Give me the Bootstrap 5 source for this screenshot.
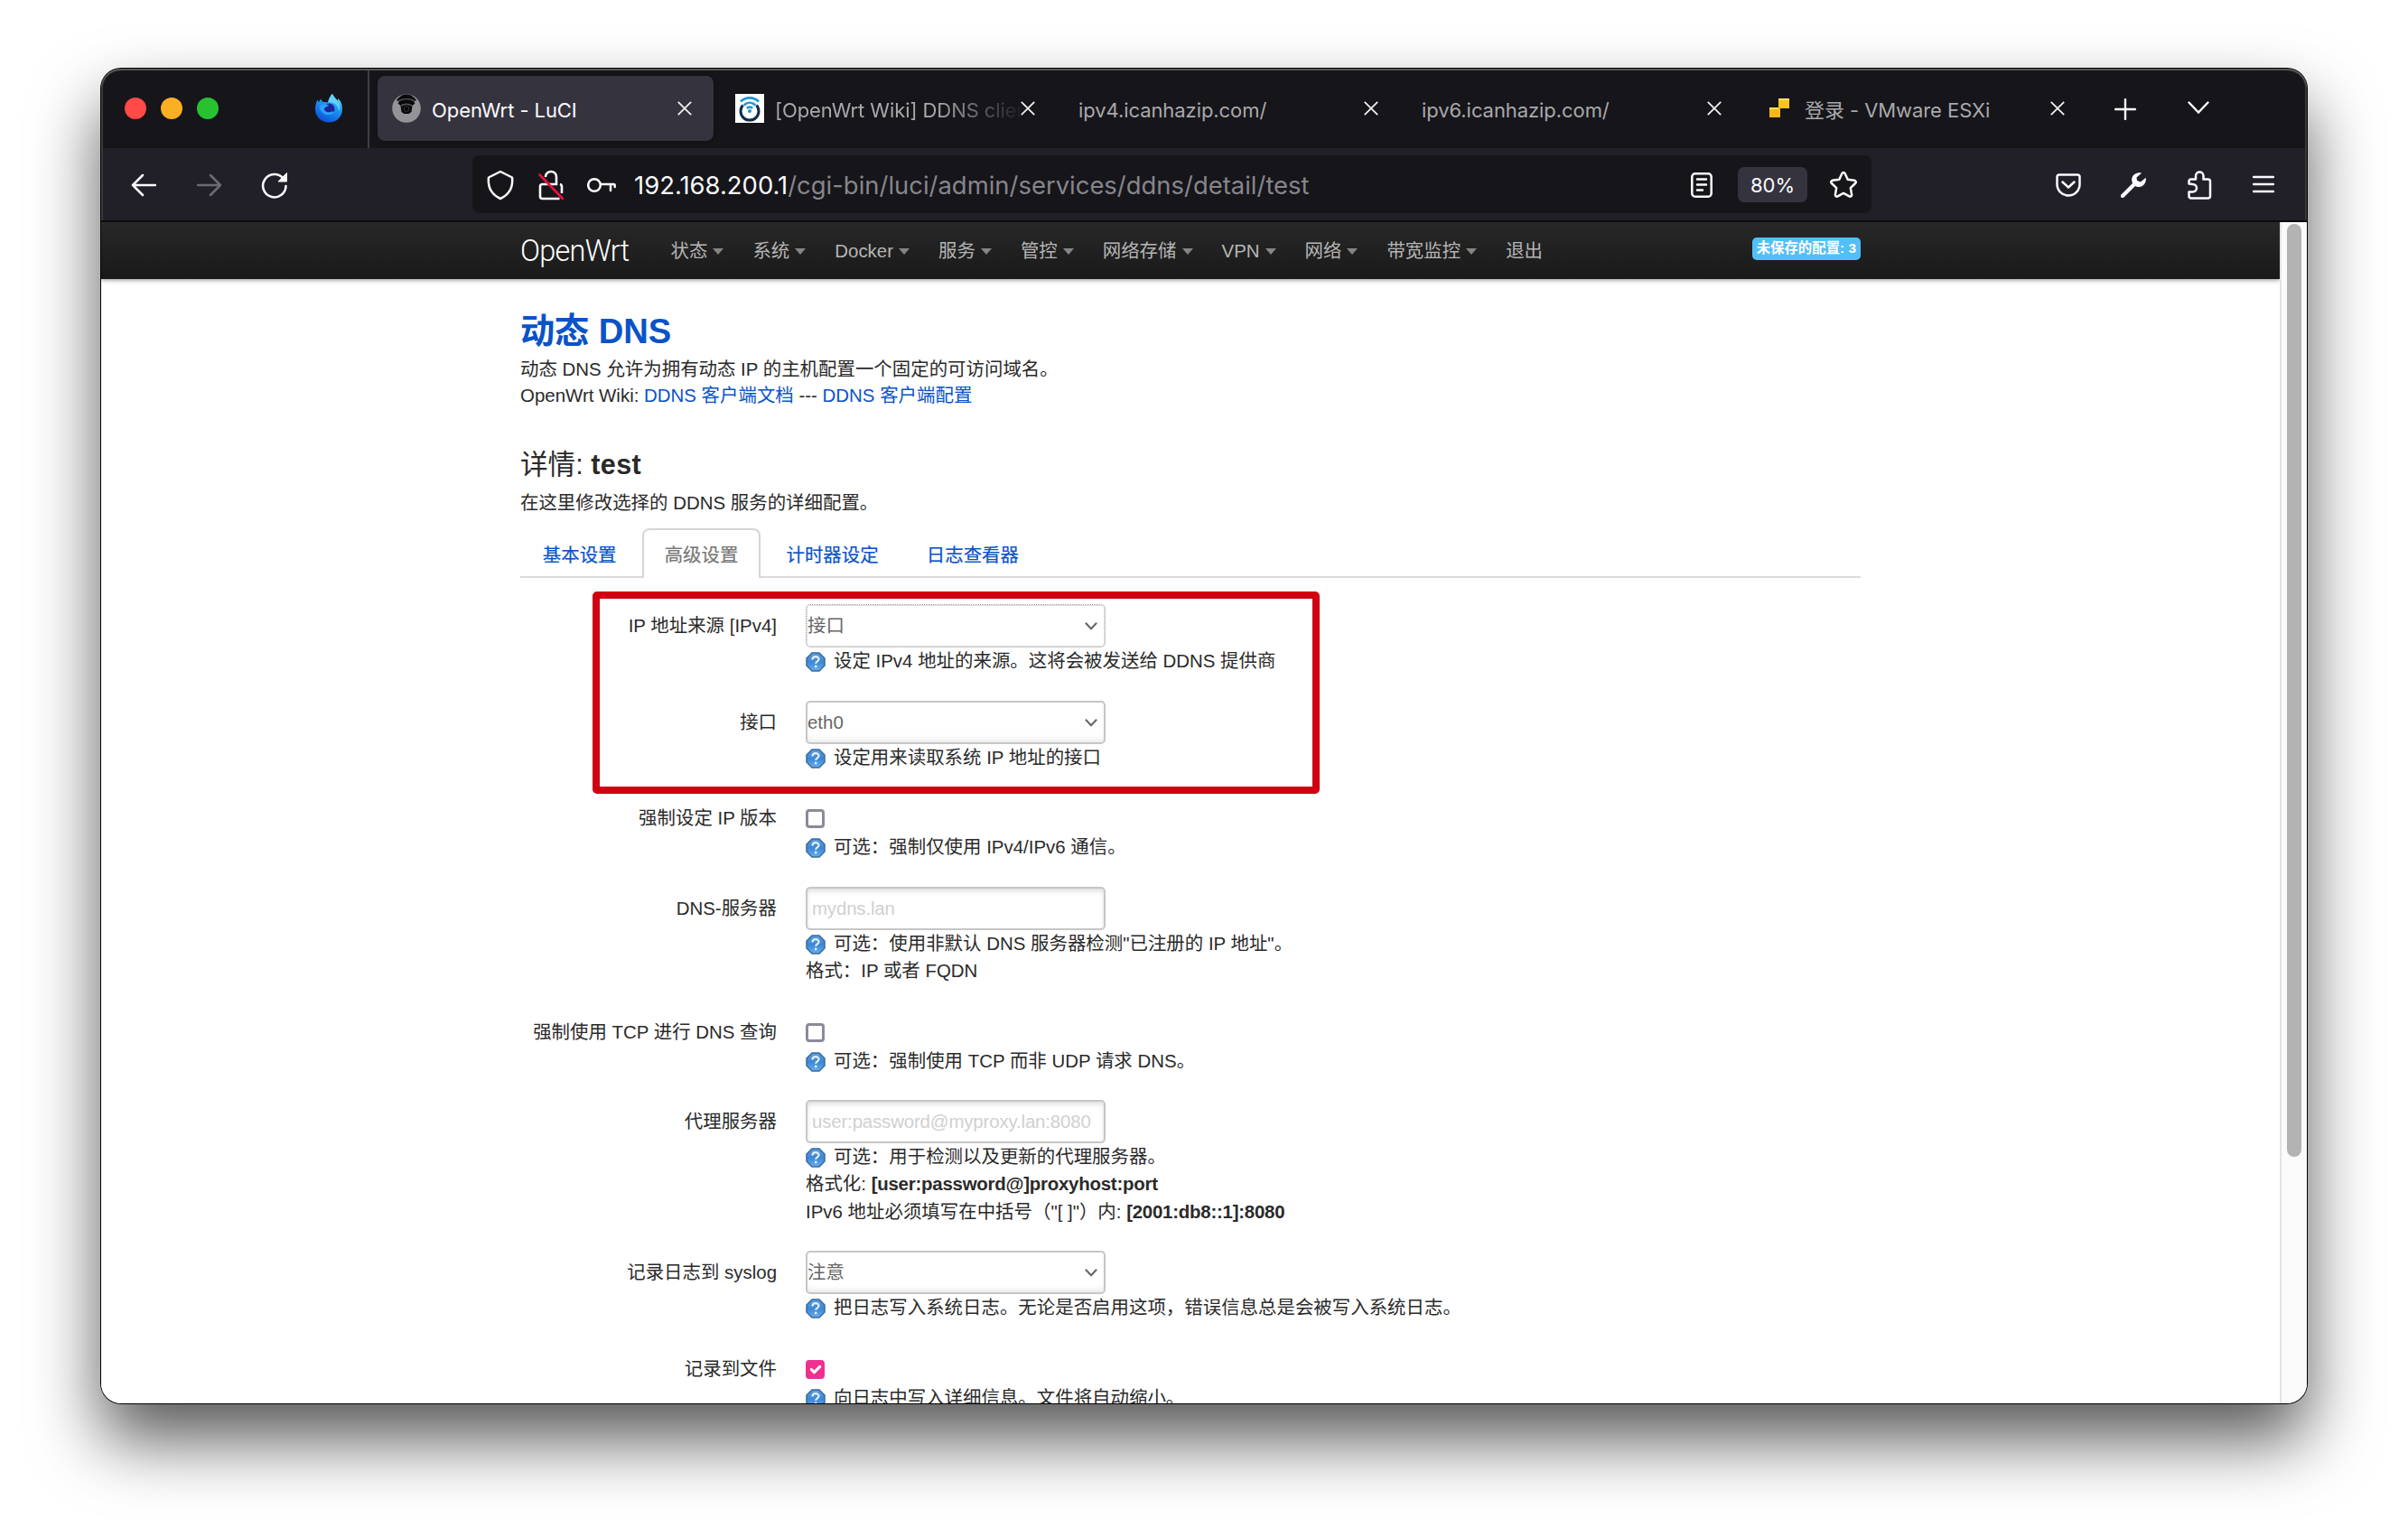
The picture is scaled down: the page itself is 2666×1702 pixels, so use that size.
<!DOCTYPE html>
<html lang="zh-CN">
<head>
<meta charset="utf-8">
<title>OpenWrt - LuCI</title>
<link href="https://cdn.jsdelivr.net/npm/bootstrap@5.3.0/dist/css/bootstrap.min.css" rel="stylesheet">
<style>
body{margin:0;padding:76px 112px;width:2666px;height:1702px;overflow:hidden;background:#fff;color:#2a2a2a;font:20.45px/28.8px "Liberation Sans","Noto Sans CJK SC",sans-serif}
svg{display:block;flex:none}
.win{width:2442px;height:1478px;border-radius:22px;box-shadow:0 0 0 1px #000,0 40px 76px rgba(0,0,0,.66);position:relative}
.clip{border-radius:22px;overflow:hidden;height:100%}
.rim{position:absolute;inset:0;height:168px;border-radius:22px 22px 0 0;pointer-events:none;box-shadow:inset 0 2px 0 #565856,inset 2px 0 0 #39393c,inset -2px 0 0 #39393c}
.ui{font-family:Inter,"Noto Sans CJK SC",sans-serif}
.tabstrip{height:88px;background:#16151a;flex:none}
.lights{width:297px;padding-left:26px;gap:16px;border-right:2px solid #3e3e44;margin-right:9px}
.light{width:24px;height:24px;border-radius:50%}
.wtab{width:372px;height:72px;margin-right:8px;padding:0 24px 0 16px;border-radius:8px;color:#a9a9ac;font-size:22px;letter-spacing:-.07px;white-space:nowrap}
.wtab.on{background:#35333e;color:#fbfbfe;box-shadow:0 0 6px rgba(0,0,0,.4)}
.wtab .ttl{flex:1;min-width:0;overflow:hidden;line-height:30px;padding-top:3px}
.fade-end{-webkit-mask-image:linear-gradient(90deg,#000 66%,transparent 102%)}
.fav{width:32px;height:32px;margin-right:12px}
.toolbar{height:82px;background:#211f28;border-bottom:2px solid #0c0c0e;flex:none;position:relative;padding-left:30px}
.toolbar>svg,.urlbar>svg,.addr{margin-top:2px}
.urlbar{width:1549px;height:64px;border-radius:8px;background:#16151a;margin-left:202px;padding:0 15px 0 16px}
.addr{font-size:27.4px;letter-spacing:.02px;color:#86868b;flex:1;margin-left:20px;white-space:nowrap}
.addr b{color:#fbfbfe;font-weight:400}
.zoomlvl{width:77px;height:39px;border-radius:7px;background:#35333e;color:#fbfbfe;font-size:22px;line-height:40px;text-align:center;margin:0 24px 0 28px}
.page{width:2412px;background:#fff}
.sbar{width:30px;background:#fafafa;border-left:2px solid #e3e3e3;padding:2px 6px}
.thumb{width:16px;height:1033px;border-radius:8px;background:#b3b3b3}
.luci-nav{height:63px;padding:0;background:linear-gradient(#282828,#191919);box-shadow:0 1px 5px rgba(0,0,0,.45);position:relative;justify-content:flex-start;flex-wrap:nowrap}
.inner{width:1484px;margin:0 auto}
.brandname{font-family:Roboto,sans-serif;font-weight:300;font-size:32.5px;color:#fff;width:150.500px;letter-spacing:-.75px;line-height:58px}
.luci-nav .nav-link{color:#b5b5b5;padding:0 16px;line-height:59px;font-size:20.45px;white-space:nowrap}
.luci-nav .dropdown-toggle::after{border-top:7px solid #858585;border-left:6px solid transparent;border-right:6px solid transparent;margin-left:6px;vertical-align:3.5px}
.unsaved{background:#53bff8;color:#fff;font-size:15.4px;line-height:16px;font-weight:700;padding:4px 5px 5px;border-radius:5px;margin-left:auto;margin-bottom:4px}
a{color:#0a53c8;text-decoration:none}
h2.ttl2{font-size:38.2px;line-height:57px;font-weight:700;margin:0;padding-top:29px;letter-spacing:-.1px}
h3.ttl3{font-size:30.6px;line-height:58px;margin:32px 0 0;font-weight:400}
h3.ttl3 b{font-weight:700;letter-spacing:.4px}
.luci-tabs{border-bottom:2px solid #dadada;height:55px;margin-top:14px}
.luci-tabs .nav-link{border-width:2px;border-radius:8px 8px 0 0;padding:0 22.800px;height:56px;line-height:55px;margin-bottom:-2px;margin-right:3.500px;color:#0a53c8;-webkit-text-stroke:.2px}
.luci-tabs .nav-link.active{color:#777;border-color:#d5d5d5 #d5d5d5 #fff}
.frm{padding-top:29px;position:relative}
.frow{margin-bottom:28.200px}
.flabel{width:284px;margin-right:32px;text-align:right;line-height:30px;padding-top:9px}
.fctl{line-height:30.3px}
.fctl b{letter-spacing:-.24px}
.fctl .form-select,.fctl .form-control{width:332px;height:48px;border:2px solid #c6c6c6;border-radius:5px;font-size:20.45px;color:#666;line-height:28px;padding:0 5px}
.fctl .form-select{padding:0;box-shadow:inset 0 -5px 8px -4px rgba(0,0,0,.12);background-size:16px 16px;background-position:right 6px center;--bs-form-select-bg-img:url("data:image/svg+xml,%3csvg xmlns='http://www.w3.org/2000/svg' viewBox='0 0 17 17'%3e%3cpath fill='none' stroke='%23666' stroke-width='2.2' d='M2 5l6.500 7L15 5'/%3e%3c/svg%3e");background-image:var(--bs-form-select-bg-img)}
.fctl .form-select.focusring{border:1px dotted #999;padding-left:1px;background-position:right 7px center;box-shadow:0 0 0 1px #ddd inset}
.fctl .form-control{box-shadow:inset 0 3px 5px rgba(0,0,0,.13)}
.fctl .form-control::placeholder{color:#d0d0d0;opacity:1;letter-spacing:-.16px}
.ckbox{height:41px;padding-top:14px}
.ckbox .form-check-input{width:21px;height:21px;border:3px solid #8b8a97;border-radius:4px;margin:0;display:block;float:none}
.ckbox .form-check-input:checked{background-color:#f0308f;border-color:#f0308f;background-size:21px}
.hint .q{display:inline-block;width:22px;height:22px;margin:0 9px 0 0;vertical-align:-5px}
.callout-box{position:absolute;left:80px;top:15px;width:805px;height:224px;border:8px solid #cf0011;border-radius:5px}
</style>
</head>
<body>
<svg width="0" height="0" class="position-absolute"><defs>
<linearGradient id="qg" x1="0" y1="0" x2="0" y2="1"><stop offset="0" stop-color="#5c9fe0"/><stop offset=".5" stop-color="#3c86d6"/><stop offset="1" stop-color="#66b0ee"/></linearGradient>
<linearGradient id="fg" x1=".8" y1="0" x2=".3" y2="1"><stop offset="0" stop-color="#7de8f5"/><stop offset=".4" stop-color="#1e9bf5"/><stop offset="1" stop-color="#0a4fd8"/></linearGradient>
<symbol id="q" viewBox="0 0 22 22"><path d="M7 1h8l6 6v8l-6 6H7l-6-6V7z" fill="url(#qg)" stroke="#3a6a9c" stroke-width="1.500"/><path d="M7.500 8.500c0-4.300 7-4.300 7-.5 0 2.500-3.300 2.200-3.300 4.800" fill="none" stroke="#e4f0fc" stroke-width="2.200"/><circle cx="11.200" cy="16" r="1.400" fill="#e4f0fc"/></symbol>
<symbol id="x" viewBox="0 0 16 16"><path d="M.8.8l14.400 14.400M15.200.8L.8 15.200" stroke="#f0f0f2" stroke-width="1.800" fill="none"/></symbol>
</defs></svg>
<div class="win"><div class="clip d-flex flex-column">
 <div class="tabstrip d-flex align-items-center ui">
  <div class="lights d-flex align-items-center h-100">
   <span class="light" style="background:#ff4a47"></span><span class="light" style="background:#fdaf24"></span><span class="light" style="background:#28c231"></span>
   <svg class="ms-auto" style="margin-right:27px" width="32" height="32" viewBox="0 0 32 32"><path d="M20 0c1 3 4 5 5.500 7.500.5-1 .7-1.700.7-2.500 3.500 3 4.800 7 4.800 12C31 25.500 24.500 31.500 16 31.500S1 25 1 17c0-4 1-8 2.500-10.500L5 9c1-1.500 1.500-2.500 2.200-3.500C8 8 9 9 11 9c2-.2 3 0 4 .5C16 6 17.500 2 20 0z" fill="url(#fg)"/><path d="M20 0c1 3 4 5 5.500 7.500 3 5 3 9 1.500 12 0-4-2-8-6-9.500-2-.8-4-.7-6-.5C16 6 17.500 2 20 0z" fill="#5fd3f8"/><circle cx="16.500" cy="16.500" r="6" fill="#1d2596"/><path d="M5.500 14c2-3 5-2 10.500-2-1 2.500-4 2-5 4.500 0 3 4 4.500 7 3.500 2-.7 3-.5 4 0-2 3.500-8 4.500-12 1.500C7.500 19.500 6 17 5.500 14z" fill="#2aa0f6"/></svg>
  </div>
  <div class="wtab on d-flex align-items-center">
   <svg class="fav" viewBox="0 0 32 32"><circle cx="16" cy="16" r="15.800" fill="#939398"/><path d="M5 7c1-2 4-4 6-5.500C14 .2 18 .2 21 1.500 23 3 26 5 27 7l-3 1.500 1.500 2-3 2.500-1 7-3 2h-5l-3-2-1-7-3-2.500L8 8.500z" fill="#09090b"/><path d="M7.500 7.500c5-2.500 12-2.500 17 0M10 13c3.500-2 8.500-2 12 0" stroke="#55555a" stroke-width="1.500" fill="none"/><circle cx="16" cy="16.500" r="2.800" fill="#000" stroke="#38383b"/></svg>
   <div class="ttl">OpenWrt - LuCI</div><svg width="16" height="16"><use href="#x"/></svg></div>
  <div class="wtab d-flex align-items-center">
   <svg class="fav" viewBox="0 0 32 32"><path fill="#fff" d="M0 0h32v32H0z"/><path d="M8.500 12.500a10 10 0 1 0 15 0" fill="none" stroke="#0b2d4c" stroke-width="3"/><path d="M6 8.500c5.500-5.500 14.500-5.500 20 0M9.500 12.500c4-3.700 9-3.700 13 0M12.800 16c2-2 4.400-2 6.400 0" fill="none" stroke="#1f97d4" stroke-width="2.600"/><circle cx="16" cy="19" r="2" fill="#1f97d4"/></svg>
   <div class="ttl fade-end">[OpenWrt Wiki] DDNS client</div><svg width="16" height="16"><use href="#x"/></svg></div>
  <div class="wtab d-flex align-items-center"><div class="ttl">ipv4.icanhazip.com/</div><svg width="16" height="16"><use href="#x"/></svg></div>
  <div class="wtab d-flex align-items-center"><div class="ttl">ipv6.icanhazip.com/</div><svg width="16" height="16"><use href="#x"/></svg></div>
  <div class="wtab d-flex align-items-center">
   <svg class="fav" viewBox="0 0 32 32"><path d="M15 5h12v11H15z" fill="#fcc419"/><path d="M5 15h12v11H5z" fill="#fbb814"/><path d="M15 5h12v2H15zM5 15h10v2H5z" fill="#fde16a"/></svg>
   <div class="ttl">登录 - VMware ESXi</div><svg width="16" height="16"><use href="#x"/></svg></div>
  <svg style="margin-left:23px;margin-top:1px" width="24" height="24" viewBox="0 0 24 24"><path d="M12 1v22M1 12h22" stroke="#fbfbfe" stroke-width="2.400" stroke-linecap="round"/></svg>
  <svg style="margin-left:57px" width="24" height="16" viewBox="0 0 24 16"><path d="M1.500 1.500L12 12.500l10.500-11" stroke="#fbfbfe" stroke-width="2.400" stroke-linecap="round" fill="none"/></svg>
 </div>
 <div class="toolbar d-flex align-items-center ui">
  <svg style="margin-left:3px" width="28" height="26" viewBox="0 0 28 26"><path d="M13 2L2 13l11 11M2 13h25" stroke="#fbfbfe" stroke-width="2.500" stroke-linecap="round" stroke-linejoin="round" fill="none"/></svg>
  <svg style="margin-left:45px" width="28" height="26" viewBox="0 0 28 26"><path d="M15 2l11 11-11 11M26 13H1" stroke="#6c6b72" stroke-width="2.500" stroke-linecap="round" stroke-linejoin="round" fill="none"/></svg>
  <svg style="margin-left:43px" width="30" height="30" viewBox="0 0 30 30"><path d="M24.500 7.500A12.700 12.700 0 1 0 27.500 16" stroke="#fbfbfe" stroke-width="2.600" stroke-linecap="round" fill="none"/><path d="M28.500 1.500v9.500h-9.500z" fill="#fbfbfe" stroke="#fbfbfe" stroke-linejoin="round"/></svg>
  <div class="urlbar d-flex align-items-center" style="margin-left:204px">
   <svg width="30" height="34" viewBox="0 0 30 34"><path d="M15 2L28 8.500c1 9-1.500 18-13 23.500C3.500 26.500 1 17.500 2 8.500z" stroke="#fbfbfe" stroke-width="2.500" stroke-linejoin="round" fill="none"/></svg>
   <svg style="margin-left:27px" width="28" height="34" viewBox="0 0 28 34"><path d="M8 8c0-8 12-8 12 0v8H4.500c-1.500 0-2.500 1-2.500 2.500v11c0 1.500 1 2.500 2.500 2.500h19M24 16c1.500.5 2 1 2 2.500V26" stroke="#fbfbfe" stroke-width="2.600" fill="none"/><path d="M1.500 5.500L27 32" stroke="#e5123f" stroke-width="2.800" stroke-linecap="round"/></svg>
   <svg style="margin-left:26px" width="32" height="18" viewBox="0 0 32 18"><circle cx="8" cy="9" r="6.800" stroke="#fbfbfe" stroke-width="2.500" fill="none"/><path d="M15 8h14.500c1 0 1.200.5 1.200 1.500V11M26 8v7" stroke="#fbfbfe" stroke-width="2.500" fill="none" stroke-linecap="round"/></svg>
   <div class="addr"><b>192.168.200.1</b>/cgi-bin/luci/admin/services/ddns/detail/test</div>
   <svg width="24" height="28" viewBox="0 0 24 28"><rect x="1.300" y="1.300" width="21.400" height="25.400" rx="3.500" stroke="#fbfbfe" stroke-width="2.500" fill="none"/><path d="M7 7.500h10M7 13.500h10M7 19.500h6" stroke="#fbfbfe" stroke-width="2.500" stroke-linecap="round"/></svg>
   <div class="zoomlvl">80%</div>
   <svg width="32" height="32" viewBox="0 0 32 32"><path d="M14.300 3.200c.7-1.500 2.700-1.500 3.400 0l3 6.600 7.400 1c1.600.2 2.200 2.100 1 3.200l-5.300 5.100 1.300 7.300c.3 1.600-1.300 2.800-2.700 2L16 24.900l-6.400 3.500c-1.400.8-3-.4-2.700-2l1.300-7.300L2.900 14c-1.200-1.100-.6-3 1-3.200l7.400-1z" stroke="#fbfbfe" stroke-width="2.500" stroke-linejoin="round" fill="none"/></svg>
  </div>
  <svg style="margin-left:204px" width="28" height="26" viewBox="0 0 28 26"><path d="M4 1.500h20c1.500 0 2.500 1 2.500 2.500v8c0 7-5.500 12.500-12.500 12.500S1.500 19 1.500 12V4c0-1.500 1-2.500 2.500-2.500z" stroke="#fbfbfe" stroke-width="2.500" fill="none"/><path d="M7.500 9.500l6.500 6 6.500-6" stroke="#fbfbfe" stroke-width="2.500" stroke-linecap="round" stroke-linejoin="round" fill="none"/></svg>
  <svg style="margin-left:44px" width="28" height="28" viewBox="0 0 28 28"><path d="M2 26L17 11" stroke="#fbfbfe" stroke-width="4.200" stroke-linecap="round"/><path d="M23 .8c-6-2-11.500 3-10.800 8.200.5 4.500 4.300 7.300 8.300 7 5-.4 8-5 7.200-10.200L22 10.500 18 9l-.500-3.500z" fill="#fbfbfe"/></svg>
  <svg style="margin-left:46px" width="27" height="32" viewBox="0 0 27 32"><path d="M1.500 14.500V12c0-1.500 1-2.500 2.500-2.500h5V6c0-6 8.500-6 8.500 0v3.500h5c1.500 0 2.500 1 2.500 2.500v16c0 1.500-1 2.500-2.500 2.500H4c-1.500 0-2.500-1-2.500-2.500v-4.500h4c6 0 6-8.500 0-8.500z" stroke="#fbfbfe" stroke-width="2.500" stroke-linejoin="round" fill="none"/></svg>
  <svg style="margin-left:45px;margin-top:0" width="24" height="20" viewBox="0 0 24 20"><path d="M1 2h22M1 10h22M1 18h22" stroke="#fbfbfe" stroke-width="2.400" stroke-linecap="round"/></svg>
 </div>
 <div class="d-flex flex-grow-1" style="min-height:0">
  <div class="page overflow-hidden">
   <nav class="luci-nav navbar"><div class="inner d-flex align-items-center">
    <span class="brandname">OpenWrt</span>
    <a class="nav-link dropdown-toggle">状态</a><a class="nav-link dropdown-toggle">系统</a><a class="nav-link dropdown-toggle">Docker</a><a class="nav-link dropdown-toggle">服务</a><a class="nav-link dropdown-toggle">管控</a><a class="nav-link dropdown-toggle">网络存储</a><a class="nav-link dropdown-toggle">VPN</a><a class="nav-link dropdown-toggle">网络</a><a class="nav-link dropdown-toggle">带宽监控</a><a class="nav-link">退出</a>
    <span class="badge unsaved">未保存的配置: 3</span>
   </div></nav>
   <div class="inner">
    <h2 class="ttl2"><a href="#">动态 DNS</a></h2>
    <div>动态 DNS 允许为拥有动态 IP 的主机配置一个固定的可访问域名。<br>OpenWrt Wiki: <a href="#">DDNS 客户端文档</a> --- <a href="#">DDNS 客户端配置</a></div>
    <h3 class="ttl3">详情: <b>test</b></h3>
    <div>在这里修改选择的 DDNS 服务的详细配置。</div>
    <div class="nav nav-tabs luci-tabs"><a class="nav-link">基本设置</a><a class="nav-link active">高级设置</a><a class="nav-link">计时器设定</a><a class="nav-link">日志查看器</a></div>
    <form class="frm">
     <div class="frow d-flex"><label class="flabel">IP 地址来源 [IPv4]</label><div class="fctl"><select class="form-select focusring"><option>接口</option></select><div class="hint"><svg class="q"><use href="#q"/></svg>设定 IPv4 地址的来源。这将会被发送给 DDNS 提供商</div></div></div>
     <div class="frow d-flex"><label class="flabel">接口</label><div class="fctl"><select class="form-select"><option>eth0</option></select><div class="hint"><svg class="q"><use href="#q"/></svg>设定用来读取系统 IP 地址的接口</div></div></div>
     <div class="frow d-flex"><label class="flabel">强制设定 IP 版本</label><div class="fctl"><div class="ckbox"><input type="checkbox" class="form-check-input"></div><div class="hint"><svg class="q"><use href="#q"/></svg>可选：强制仅使用 IPv4/IPv6 通信。</div></div></div>
     <div class="frow d-flex"><label class="flabel">DNS-服务器</label><div class="fctl"><input class="form-control" placeholder="mydns.lan"><div class="hint"><svg class="q"><use href="#q"/></svg>可选：使用非默认 DNS 服务器检测"已注册的 IP 地址"。<br>格式：IP 或者 FQDN</div></div></div>
     <div class="frow d-flex"><label class="flabel">强制使用 TCP 进行 DNS 查询</label><div class="fctl"><div class="ckbox"><input type="checkbox" class="form-check-input"></div><div class="hint"><svg class="q"><use href="#q"/></svg>可选：强制使用 TCP 而非 UDP 请求 DNS。</div></div></div>
     <div class="frow d-flex"><label class="flabel">代理服务器</label><div class="fctl"><input class="form-control" placeholder="user:password@myproxy.lan:8080"><div class="hint"><svg class="q"><use href="#q"/></svg>可选：用于检测以及更新的代理服务器。<br>格式化: <b>[user:password@]proxyhost:port</b><br>IPv6 地址必须填写在中括号（"[ ]"）内: <b>[2001:db8::1]:8080</b></div></div></div>
     <div class="frow d-flex"><label class="flabel">记录日志到 syslog</label><div class="fctl"><select class="form-select"><option>注意</option></select><div class="hint"><svg class="q"><use href="#q"/></svg>把日志写入系统日志。无论是否启用这项，错误信息总是会被写入系统日志。</div></div></div>
     <div class="frow d-flex"><label class="flabel">记录到文件</label><div class="fctl"><div class="ckbox"><input type="checkbox" class="form-check-input" checked></div><div class="hint"><svg class="q"><use href="#q"/></svg>向日志中写入详细信息。文件将自动缩小。</div></div></div>
     <div class="callout-box"></div>
    </form>
   </div>
  </div>
  <div class="sbar"><div class="thumb"></div></div>
 </div>
</div><div class="rim"></div></div>
<script src="https://cdn.jsdelivr.net/npm/bootstrap@5.3.0/dist/js/bootstrap.bundle.min.js"></script>
</body>
</html>
